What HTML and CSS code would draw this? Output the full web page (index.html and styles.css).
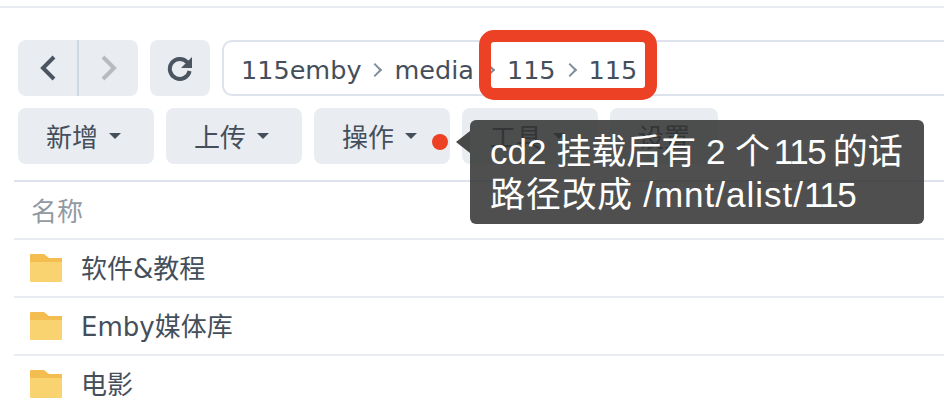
FILE: index.html
```html
<!DOCTYPE html>
<html lang="zh-CN">
<head>
  <meta charset="UTF-8">
  <title>文件</title>
  <link rel="stylesheet" href="styles.css">
</head>
<body>
  <div class="top-line"></div>

  <div class="nav-row">
    <div class="nav-group">
      <button class="nav-btn nav-back">
        <svg width="16" height="26" viewBox="0 0 16 26"><path d="M14 2 3 13l11 11" fill="none" stroke="#4a5561" stroke-width="4"/></svg>
      </button>
      <button class="nav-btn">
        <svg width="16" height="26" viewBox="0 0 16 26"><path d="M2 2l11 11L2 24" fill="none" stroke="#b7bbc0" stroke-width="4"/></svg>
      </button>
    </div>
    <button class="refresh-btn">
      <svg width="26" height="26" viewBox="0 0 26 26"><path d="M20.5 7.5A10 10 0 1 0 22.6 16" fill="none" stroke="#4a5561" stroke-width="4"/><path d="M25 2v11H14z" fill="#4a5561"/></svg>
    </button>
    <div class="path-box">
      <span>115emby</span><i class="sep"></i><span>media</span><i class="sep"></i><span>115</span><i class="sep"></i><span>115</span>
    </div>
  </div>

  <div class="action-row">
    <button class="action-btn">新增<i class="caret"></i></button>
    <button class="action-btn">上传<i class="caret"></i></button>
    <button class="action-btn">操作<i class="caret"></i></button>
    <button class="action-btn">工具<i class="caret"></i></button>
    <button class="action-btn action-plain">设置</button>
  </div>

  <div class="file-table">
    <div class="file-head">名称</div>
    <div class="file-row"><svg class="folder" viewBox="0 0 32 28"><use href="#folder"/></svg><span class="file-name">软件&amp;教程</span></div>
    <div class="file-row"><svg class="folder" viewBox="0 0 32 28"><use href="#folder"/></svg><span class="file-name">Emby媒体库</span></div>
    <div class="file-row"><svg class="folder" viewBox="0 0 32 28"><use href="#folder"/></svg><span class="file-name">电影</span></div>
  </div>

  <svg class="defs" width="0" height="0">
    <symbol id="folder" viewBox="0 0 32 28">
      <path d="M0 1q0-1 1-1h13l5 4h13v6H0z" fill="#f4bd50"/>
      <path d="M0 8h32v19q0 1-1 1H1q-1 0-1-1z" fill="#f8d36f"/>
    </symbol>
  </svg>

  <!-- 标注 -->
  <div class="mark-box"></div>
  <div class="mark-dot"></div>
  <div class="tip">
    <i class="tip-arrow"></i>
    <div>cd2 挂载后有 2 个 <span class="tip-num tip-num-mid">115</span> 的话</div>
    <div class="tip-wide">路径改成 <span class="tip-path">/mnt/alist/</span><span class="tip-num">115</span></div>
  </div>
</body>
</html>
```

FILE: styles.css
```css
body {
  margin: 0;
  background: #fff;
  font-family: "DejaVu Sans", "Noto Sans CJK SC", sans-serif;
  color: #454f5b;
  width: 944px;
  height: 404px;
  overflow: hidden;
  position: relative;
}

button {
  font: inherit;
  color: inherit;
  border: 0;
  padding: 0;
}

.top-line {
  height: 2px;
  margin-top: 6px;
  background: #e8ecf1;
}

.nav-row {
  display: flex;
  gap: 12px;
  margin: 32px 0 0 18px;
  height: 56px;
}

.nav-group {
  display: flex;
  width: 120px;
  background: #e9edf1;
  border-radius: 8px;
}

.nav-btn {
  flex: 1;
  background: none;
  display: flex;
  align-items: center;
  justify-content: center;
}

.nav-back {
  border-right: 2px solid #cdd8e2;
}

.refresh-btn {
  width: 60px;
  background: #e9edf1;
  border-radius: 8px;
  display: flex;
  align-items: center;
  justify-content: center;
}

.path-box {
  flex: 1;
  margin-right: -40px;
  box-sizing: border-box;
  border: 2px solid #dde2ec;
  border-radius: 10px;
  padding: 3px 0 0 17px;
  display: flex;
  align-items: center;
  font-size: 25.5px;
}

.sep {
  width: 10px;
  height: 10px;
  margin: 0 14px 0 9px;
  border-top: 2px solid #7f8c99;
  border-right: 2px solid #7f8c99;
  transform: rotate(45deg);
  box-sizing: border-box;
}

.action-row {
  display: flex;
  gap: 12px;
  margin: 12px 0 0 18px;
}

.action-btn {
  width: 136px;
  height: 56px;
  box-sizing: border-box;
  padding: 0 5px 2px 0;
  background: #e9edf1;
  border-radius: 8px;
  font-size: 26px;
  display: flex;
  align-items: center;
  justify-content: center;
}

.action-plain {
  width: 108px;
  padding-right: 0;
}

.caret {
  width: 0;
  height: 0;
  margin: 2px 0 0 11px;
  border-top: 6px solid #454f5b;
  border-left: 6px solid transparent;
  border-right: 6px solid transparent;
}

.file-table {
  margin: 16px 0 0 14px;
}

.file-head {
  height: 56px;
  line-height: 60px;
  padding-left: 17px;
  border-top: 2px solid #dde2ec;
  font-size: 26px;
  color: #919aa3;
}

.file-row {
  height: 56px;
  border-top: 2px solid #e8ecf1;
  padding-left: 16px;
  display: flex;
  align-items: center;
  font-size: 26px;
}

.file-name {
  margin-bottom: 3px;
}

.folder {
  width: 32px;
  height: 28px;
  margin-right: 19px;
}

.defs {
  position: absolute;
}

.mark-box {
  position: absolute;
  left: 479px;
  top: 30px;
  width: 178px;
  height: 70px;
  box-sizing: border-box;
  border: 12px solid #ec4125;
  border-radius: 15px;
}

.mark-dot {
  position: absolute;
  left: 432px;
  top: 134px;
  width: 16px;
  height: 16px;
  border-radius: 50%;
  background: #ec4125;
}

.tip {
  position: absolute;
  left: 470px;
  top: 120px;
  width: 454px;
  height: 104px;
  box-sizing: border-box;
  padding: 10px 20px;
  border-radius: 6px;
  background: rgba(48, 48, 48, 0.85);
  color: #fff;
  font-family: "Liberation Sans", "Noto Sans CJK SC", sans-serif;
  font-size: 35px;
  line-height: 43px;
  white-space: nowrap;
}

.tip-wide {
  letter-spacing: 0.7px;
}

.tip-path {
  letter-spacing: 1px;
}

.tip-num {
  letter-spacing: -1.5px;
}

.tip-num-mid {
  margin: 0 -2px 0 -6px;
}

.tip-arrow {
  position: absolute;
  left: -14px;
  top: 11px;
  width: 0;
  height: 0;
  border-top: 11px solid transparent;
  border-bottom: 11px solid transparent;
  border-right: 14px solid #484848;
}
```
